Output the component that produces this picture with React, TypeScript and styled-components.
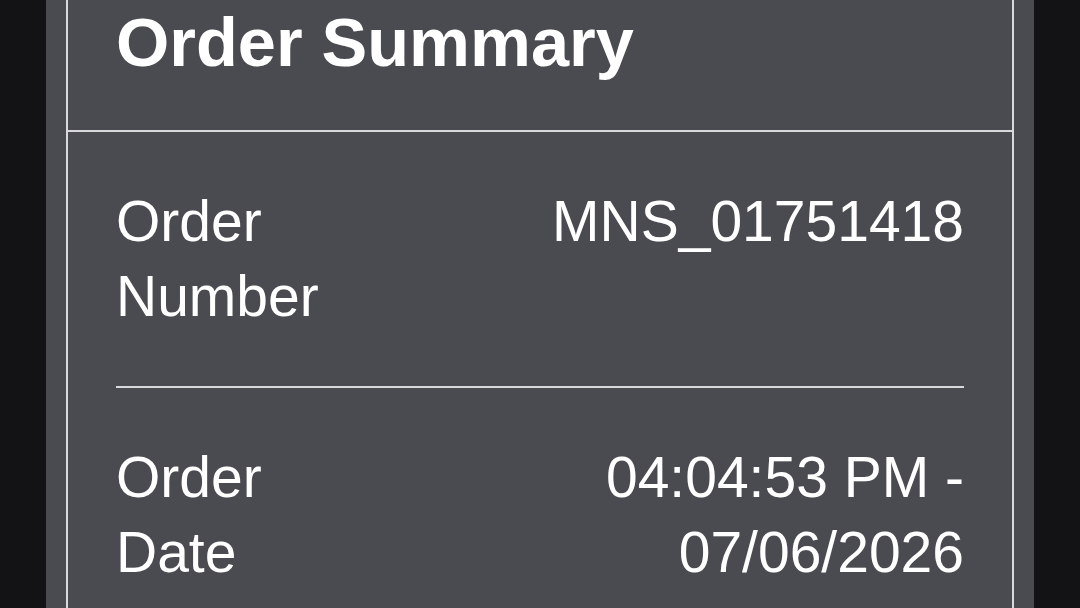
import React from "react";
import styled, { createGlobalStyle } from "styled-components";

const GlobalStyle = createGlobalStyle`
  html, body {
    margin: 0;
    padding: 0;
    background: #131315;
    height: 100%;
    overflow: hidden;
  }
  body {
    font-family: "Liberation Sans", Arial, sans-serif;
    color: #ffffff;
  }
`;

const rows = [
  { label: "Order Number", value: "MNS_01751418" },
  { label: "Order Date", value: "04:04:53 PM - 07/06/2026" },
];

export default function App() {
  return (
    <>
      <GlobalStyle />
      <StyledPage>
        <Panel>
          <Card>
            <Header>
              <Title>Order Summary</Title>
            </Header>
            <Body>
              {rows.map((row, i) => (
                <Row key={i} last={i === rows.length - 1}>
                  <Label>{row.label}</Label>
                  <Value>{row.value}</Value>
                </Row>
              ))}
            </Body>
          </Card>
        </Panel>
      </StyledPage>
    </>
  );
}

const StyledPage = styled.div`
  width: 1080px;
  height: 608px;
  display: flex;
  justify-content: center;
  overflow: hidden;
`;

const Panel = styled.div`
  width: 988px;
  box-sizing: border-box;
  padding: 0 20px;
  background: #4a4b50;
  display: flex;
  flex-direction: column;
`;

const Card = styled.div`
  border-left: 2px solid #d9d9dc;
  border-right: 2px solid #d9d9dc;
  display: flex;
  flex-direction: column;
`;

const Header = styled.div`
  padding: 3px 48px 47px;
  border-bottom: 2px solid #d9d9dc;
`;

const Title = styled.h1`
  margin: 0;
  font-size: 68.5px;
  line-height: 80px;
  font-weight: 700;
`;

const Body = styled.div`
  padding: 0 48px;
  display: flex;
  flex-direction: column;
`;

const Row = styled.div<{ last: boolean }>`
  display: flex;
  justify-content: space-between;
  padding: 52px 0;
  border-bottom: ${({ last }) => (last ? "none" : "2px solid #d9d9dc")};
  font-size: 57px;
  line-height: 75px;
`;

const Label = styled.div`
  flex: 0 0 30%;
`;

const Value = styled.div`
  flex: 0 0 70%;
  text-align: right;
`;
